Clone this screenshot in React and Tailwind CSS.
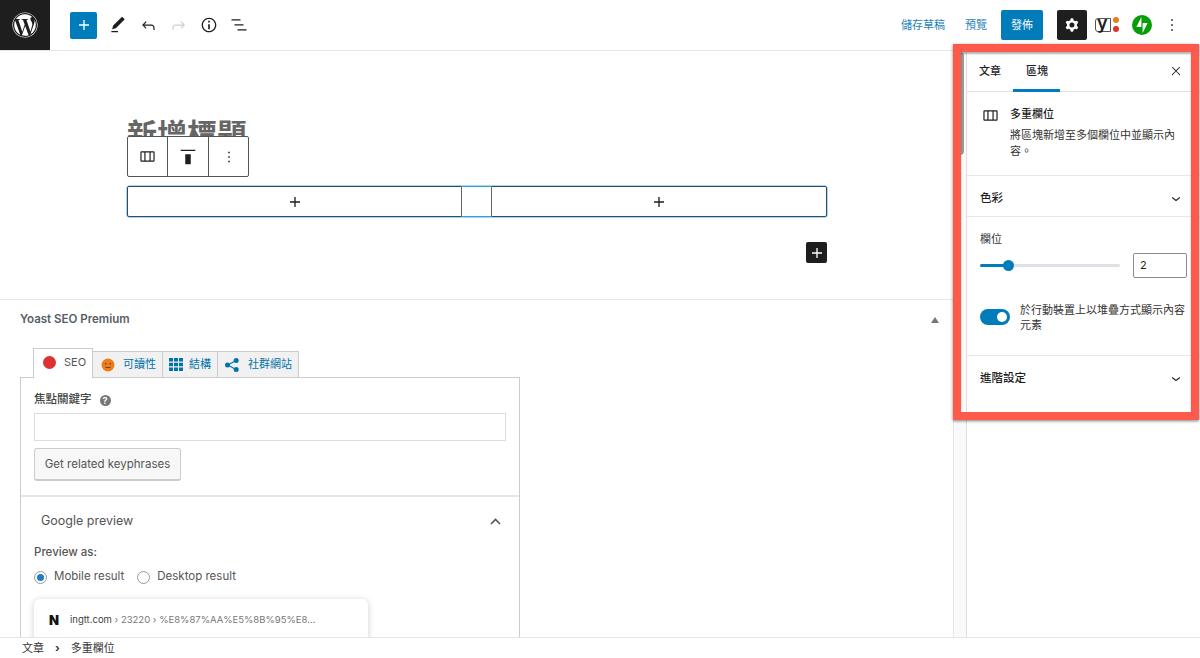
import React from "react";
import { FaWordpress } from "react-icons/fa";

const Ic = ({ d, size = 24, className = "", evenodd }) => (
  <svg width={size} height={size} viewBox="0 0 24 24" className={"shrink-0 fill-current " + className}>
    <path d={d} fillRule={evenodd ? "evenodd" : undefined} clipRule={evenodd ? "evenodd" : undefined} />
  </svg>
);
const P = {
  plus: "M18 11.2h-5.2V6h-1.6v5.2H6v1.6h5.2V18h1.6v-5.2H18z",
  edit: "M20.1 5.1L16.9 2 6.2 12.7l-1.3 4.4 4.5-1.3L20.1 5.1zM4 20.8h8v-1.5H4v1.5z",
  undo: "M18.3 11.7c-.6-.6-1.4-.9-2.3-.9H6.7l2.9-3.3-1.1-1-4.5 5L8.5 16l1-1-2.7-2.7H16c.5 0 .9.2 1.3.5 1 1 1 3.4 1 4.5v.3h1.5v-.2c0-1.5 0-4.3-1.5-5.7z",
  redo: "M15.6 6.5l-1.1 1 2.9 3.3H8c-.9 0-1.7.3-2.3.9-1.4 1.5-1.4 4.2-1.4 5.6v.2h1.5v-.3c0-1.1 0-3.5 1-4.5.3-.3.7-.5 1.3-.5h9.2L14.5 15l1.1 1.1 4.6-4.6-4.6-5z",
  info: "M12 3.2c-4.8 0-8.8 3.9-8.8 8.8 0 4.8 3.9 8.8 8.8 8.8 4.8 0 8.8-3.9 8.8-8.8 0-4.8-4-8.8-8.8-8.8zm0 16c-4 0-7.2-3.3-7.2-7.2C4.8 8 8 4.8 12 4.8s7.2 3.3 7.2 7.2c0 4-3.2 7.2-7.2 7.2zM11 17h2v-6h-2v6zm0-8h2V7h-2v2z",
  list: "M13.8 5.2H3v1.5h10.8V5.2zm-3.6 12v1.5H21v-1.5H10.2zm7.2-6H6.6v1.5h10.8v-1.5z",
  cog: "M10.289 4.836A1 1 0 0111.275 4h1.306a1 1 0 01.987.836l.244 1.466c.787.26 1.503.679 2.108 1.218l1.393-.522a1 1 0 011.216.437l.653 1.13a1 1 0 01-.23 1.273l-1.148.944a6.025 6.025 0 010 2.435l1.149.946a1 1 0 01.23 1.272l-.653 1.13a1 1 0 01-1.216.437l-1.394-.522c-.605.54-1.32.958-2.108 1.218l-.244 1.466a1 1 0 01-.987.836h-1.306a1 1 0 01-.986-.836l-.244-1.466a5.995 5.995 0 01-2.108-1.218l-1.394.522a1 1 0 01-1.217-.436l-.653-1.131a1 1 0 01.23-1.272l1.149-.946a6.026 6.026 0 010-2.435l-1.148-.944a1 1 0 01-.23-1.272l.653-1.131a1 1 0 011.217-.437l1.393.522a5.994 5.994 0 012.108-1.218l.244-1.466zM14.929 12a3 3 0 11-6 0 3 3 0 016 0z",
  top: "M9 20h6V9H9v11zM4 4v1.5h16V4H4z",
  more: "M13 19h-2v-2h2v2zm0-6h-2v-2h2v2zm0-6h-2V5h2v2z",
  close: "M13 11.8l6.1-6.3-1-1-6.1 6.2-6.1-6.2-1 1 6.1 6.3-6.5 6.7 1 1 6.5-6.6 6.5 6.6 1-1z",
  down: "M17.5 10.6L12 15l-5.5-4.4.9-1.2L12 13l4.6-3.6.9 1.2z",
  columns: "M4.5 5.500h15A1.5 1.5 0 0121 7v10a1.5 1.5 0 01-1.5 1.5h-15A1.5 1.5 0 013 17V7a1.5 1.5 0 011.500-1.500zm0 1.500v10H8V7H4.500zm5 0v10h5V7h-5zm6.500 0v10h3.500V7H16z",
};

function Panel({ title, last }) {
  return (
    <div className={"h-[41px] flex items-center justify-between pt-[5px] pl-[13px] pr-[15px] " + (last ? "" : "border-b border-[#e8e8e8]")}>
      <span className="text-[11.500px] font-medium text-[#1e1e1e]">{title}</span>
      <Ic d={P.down} size={18} className="text-[#1e1e1e]" />
    </div>
  );
}

function Sidebar() {
  return (
    <aside className="w-[234px] shrink-0 h-full border-l border-[#e0e0e0] bg-white flex flex-col">
      <div className="h-[41px] flex items-center border-b border-[#e0e0e0] pl-[12px] pr-[17px] text-[11px] text-[#1e1e1e]">
        <span className="w-[47px] font-medium">文章</span>
        <div className="relative h-full w-[47px] flex items-center">
          <span className="font-medium">區塊</span>
          <div className="absolute -left-[13px] bottom-[-1px] w-[47px] h-[3px] bg-[#007cba]" />
        </div>
        <Ic d={P.close} size={14} className="ml-auto text-[#1e1e1e]" />
      </div>
      <div className="flex pl-[14px] pr-[14px] pt-[14px] h-[84px] border-b border-[#e8e8e8]">
        <Ic d={P.columns} size={19} className="text-[#1e1e1e] mr-[10px] ml-[0px]" />
        <div className="text-[11px] leading-[17px] text-[#333]">
          <div className="font-medium text-[#1e1e1e]">多重欄位</div>
          <div className="mt-[4px] leading-[16px]">將區塊新增至多個欄位中並顯示內容。</div>
        </div>
      </div>
      <Panel title="色彩" />
      <div className="h-[139px] border-b border-[#e8e8e8] pl-[13px] pr-[13px] pt-[14px]">
        <div className="text-[11px] leading-[16px] text-[#333]">欄位</div>
        <div className="mt-[6px] flex items-center justify-between">
          <div className="relative w-[140px] h-[3px] rounded bg-[#e0e0e6]">
            <div className="h-full w-[28px] rounded bg-[#007cba]" />
            <div className="absolute left-[23px] top-[-4px] w-[11px] h-[11px] rounded-full bg-[#007cba]" />
          </div>
          <div className="w-[54px] h-[25px] border border-[#8d8d8d] rounded-[2px] flex items-center pl-[6px] text-[11px] text-[#1e1e1e]">2</div>
        </div>
        <div className="mt-[25px] flex items-start">
          <div className="relative mt-[6px] w-[30px] h-[16px] rounded-full bg-[#007cba] shrink-0">
            <div className="absolute right-[3px] top-[3px] w-[10px] h-[10px] rounded-full bg-white" />
          </div>
          <div className="ml-[10px] text-[11px] leading-[15px] text-[#333]">於行動裝置上以堆疊方式顯示內容元素</div>
        </div>
      </div>
      <Panel title="進階設定" last />
    </aside>
  );
}

function Tab({ children, active, w }) {
  return (
    <div className={active
      ? "h-[30px] -mb-[1px] relative z-10 bg-white border border-b-0 border-[#ccc] flex items-center pb-[2px] text-[11px] text-[#555] " + w
      : "h-[26px] bg-[#f1f1f1] border border-b-0 border-l-0 border-[#ccc] flex items-center text-[11px] text-[#0073aa] " + w}>
      {children}
    </div>
  );
}

function Yoast() {
  return (
    <section className="flex-1 border-t border-[#e8e8e8] bg-white pl-[20px] overflow-hidden text-[#444]">
      <div className="h-[38px] pt-[1px] flex items-center justify-between pr-[14px]">
        <span className="text-[11.500px] font-semibold text-[#555d66]">Yoast SEO Premium</span>
        <svg width="8" height="6" viewBox="0 0 8 6" className="fill-[#72777c]"><path d="M4 0l4 6H0z" /></svg>
      </div>
      <div className="w-[500px] mt-[10px]">
        <div className="flex items-end pl-[13px]">
          <Tab active w="w-[60px] pl-[9px]">
            <span className="w-[13px] h-[13px] rounded-full bg-[#dc3232] mr-[8px]" />SEO
          </Tab>
          <Tab w="w-[70px] pl-[8px]">
            <svg width="14" height="14" viewBox="0 0 14 14" className="mr-[8px]"><circle cx="7" cy="7" r="6.500" fill="#ee7c1b" /><circle cx="4.800" cy="5.800" r=".8" fill="#444" /><circle cx="9.200" cy="5.800" r=".8" fill="#444" /><rect x="4.500" y="9" width="5" height=".9" fill="#444" /></svg>
            可讀性
          </Tab>
          <Tab w="w-[55px] pl-[6px]">
            <svg width="14" height="13" viewBox="0 0 14 13" className="mr-[6px] fill-[#0073aa]">
              <path d="M0 0h4v3.600H0zM5 0h4v3.600H5zM10 0h4v3.600h-4zM0 4.700h4v3.600H0zM5 4.700h4v3.600H5zM10 4.700h4v3.600h-4zM0 9.400h4V13H0zM5 9.400h4V13H5zM10 9.400h4V13h-4z" />
            </svg>
            結構
          </Tab>
          <Tab w="w-[81px] pl-[7px]">
            <svg width="14" height="14" viewBox="0 0 14 14" className="mr-[9px] fill-[#0073aa]">
              <circle cx="2.500" cy="7" r="2.500" /><circle cx="11.200" cy="2.600" r="2.500" /><circle cx="11.200" cy="11.400" r="2.500" />
              <path d="M2.500 6.400l8.400-4.300.5 1-8.400 4.300zM2.900 6.600l8.400 4.300-.5 1-8.400-4.300z" />
            </svg>
            社群網站
          </Tab>
        </div>
        <div className="border border-[#ccc] border-b-0 h-[400px]">
          <div className="px-[13px] pt-[14px] pb-[14px] border-b-2 border-[#e5e5e5]">
            <div className="flex items-center h-[16px] text-[11.500px] font-medium text-[#444]">
              焦點關鍵字
              <span className="ml-[8px] w-[11px] h-[11px] rounded-full bg-[#777] text-white text-[9px] font-bold leading-[11px] text-center">?</span>
            </div>
            <div className="mt-[5px] h-[28px] border border-[#ddd] bg-white" />
            <div className="mt-[7px] w-[147px] h-[33px] pt-[2px] rounded-[3px] border border-[#ccc] border-b-2 bg-[#f7f7f7] flex items-center justify-center text-[11.500px] text-[#555]">
              Get related keyphrases
            </div>
          </div>
          <div className="px-[13px]">
            <div className="h-[48px] flex items-center justify-between pl-[7px] pr-[5px] text-[12.500px] text-[#555]">
              Google preview
              <svg width="11" height="7" viewBox="0 0 11 7" className="fill-none stroke-[#555] stroke-[1.6]"><path d="M1 6l4.500-4.500L10 6" /></svg>
            </div>
            <div className="text-[11.500px] leading-[14px] font-medium text-[#555]">Preview as:</div>
            <div className="mt-[11px] flex items-center text-[11.500px] text-[#555] h-[14px]">
              <span className="w-[13px] h-[13px] rounded-full border border-[#999] flex items-center justify-center mr-[7px]">
                <span className="w-[7px] h-[7px] rounded-full bg-[#1e7dc8]" />
              </span>
              <span className="mr-[13px]">Mobile result</span>
              <span className="w-[13px] h-[13px] rounded-full border border-[#999] mr-[7px]" />
              <span>Desktop result</span>
            </div>
            <div className="mt-[15px] w-[334px] h-[100px] rounded-[6px] bg-white shadow-[0_1px_6px_rgba(32,33,36,0.22)] pl-[15px] pt-[14px] flex items-start">
              <span className="w-[12px] text-[13px] leading-[14px] font-black text-[#111]">N</span>
              <span className="ml-[9px] text-[9.500px] leading-[14px] text-[#777]"><span className="text-[#444]">ingtt.com</span> › 23220 › %E8%87%AA%E5%8B%95%E8…</span>
            </div>
          </div>
        </div>
      </div>
    </section>
  );
}

export default function App() {
  return (
    <div className="relative w-[1200px] h-[658px] overflow-hidden bg-white flex flex-col font-['Inter','Noto_Sans_CJK_TC',sans-serif]">
      <header className="h-[51px] shrink-0 flex items-center border-b border-[#e5e5e5] bg-white">
        <div className="w-[50px] h-[50px] bg-[#1e1e1e] flex items-center justify-center text-white"><FaWordpress size={26} /></div>
        <div className="ml-[20px] w-[27px] h-[27px] rounded-[2px] bg-[#007cba] text-white flex items-center justify-center"><Ic d={P.plus} size={20} /></div>
        <div className="ml-[7px] w-[27px] flex justify-center"><Ic d={P.edit} size={20} className="text-[#1e1e1e]" /></div>
        <div className="ml-[4px] w-[27px] flex justify-center"><Ic d={P.undo} size={19} className="text-[#1e1e1e]" /></div>
        <div className="ml-[3px] w-[27px] flex justify-center"><Ic d={P.redo} size={19} className="text-[#cfcfcf]" /></div>
        <div className="ml-[3px] w-[27px] flex justify-center"><Ic d={P.info} size={20} className="text-[#1e1e1e]" /></div>
        <div className="ml-[3px] w-[27px] flex justify-center"><Ic d={P.list} size={20} className="text-[#1e1e1e]" /></div>
        <div className="ml-auto flex items-center">
          <span className="text-[11px] text-[#1b83b8]">儲存草稿</span>
          <span className="ml-[20px] text-[11px] text-[#1b83b8]">預覽</span>
          <div className="ml-[14px] w-[42px] h-[30px] rounded-[2px] bg-[#007cba] text-white text-[11px] flex items-center justify-center">發佈</div>
          <div className="ml-[14px] w-[30px] h-[30px] rounded-[2px] bg-[#1e1e1e] text-white flex items-center justify-center"><Ic d={P.cog} size={20} evenodd /></div>
          <div className="relative ml-[8px] w-[25px] h-[18px]">
            <div className="absolute left-0 top-[2px] w-[16px] h-[14px] rounded-l-[3px] border border-[#555] bg-white" />
            <span className="absolute left-[2px] top-[-3px] text-[18px] leading-[20px] font-semibold text-[#1e1e1e]">y</span>
            <span className="absolute right-[1px] top-[1px] w-[6px] h-[6px] rounded-full bg-[#ee7c1b]" />
            <span className="absolute right-[1px] top-[10px] w-[6px] h-[6px] rounded-full bg-[#dc3232]" />
          </div>
          <svg width="20" height="20" viewBox="0 0 20 20" className="ml-[12px]">
            <circle cx="10" cy="10" r="10" fill="#069e08" />
            <path d="M9.400 11.900H4.400l5-10zM10.600 18.100v-10h5z" fill="#fff" />
          </svg>
          <div className="ml-[10px] mr-[18px] flex justify-center"><Ic d={P.more} size={20} className="text-[#1e1e1e]" /></div>
        </div>
      </header>

      <div className="flex-1 min-h-0 flex">
        <main className="flex-1 min-w-0 flex">
          <div className="flex-1 min-w-0 flex flex-col">
            <div className="relative h-[248px] shrink-0 pl-[127px] pr-[126px]">
              <h1 className="pt-[64px] h-[85px] text-[30px] leading-[38px] font-bold text-[#666]">新增標題</h1>
              <div className="absolute left-[127px] top-[85px] h-[41px] w-[122px] flex bg-white border border-[#555] rounded-[2px] text-[#1e1e1e]">
                <div className="w-[40px] flex items-center justify-center border-r border-[#555]"><Ic d={P.columns} size={19} /></div>
                <div className="w-[41px] flex items-center justify-center border-r border-[#555]"><Ic d={P.top} size={22} /></div>
                <div className="flex-1 flex items-center justify-center"><Ic d={P.more} size={18} /></div>
              </div>
              <div className="mt-[50px] h-[31px] flex rounded-[2px] border border-[#2a4f68] shadow-[0_0_0_0.5px_#5aa9d6]">
                <div className="w-[333px] flex items-center justify-center text-[#1e1e1e]"><Ic d={P.plus} size={20} /></div>
                <div className="w-[31px] border-x border-[#666] -my-[1px] border-y border-y-[#2ea2d8]" />
                <div className="flex-1 flex items-center justify-center text-[#1e1e1e]"><Ic d={P.plus} size={20} /></div>
              </div>
              <div className="mt-[25px] flex justify-end">
                <div className="w-[21px] h-[21px] rounded-[2px] bg-[#1e1e1e] text-white flex items-center justify-center"><Ic d={P.plus} size={20} /></div>
              </div>
            </div>
            <Yoast />
          </div>
          <div className="w-[13px] shrink-0 border-l border-[#e5e5e5] bg-[#fafafa] pl-[1px] pt-[1px]">
            <div className="w-[9px] h-[103px] rounded-[4px] bg-[#9a9a9a]" />
          </div>
        </main>
        <Sidebar />
      </div>

      <footer className="h-[21px] shrink-0 relative z-10 bg-white border-t border-[#e5e5e5] flex items-center pl-[22px] text-[11px] text-[#333]">
        <span>文章</span>
        <span className="mx-[11px] text-[11px] font-bold">›</span>
        <span>多重欄位</span>
      </footer>

      <div className="absolute left-[953px] top-[44px] w-[246px] h-[376px] border-[8px] border-[#fd5a4c] shadow-[0_1px_3px_rgba(0,0,0,0.5),inset_0_2px_2px_rgba(0,0,0,0.3)] pointer-events-none" />
    </div>
  );
}
